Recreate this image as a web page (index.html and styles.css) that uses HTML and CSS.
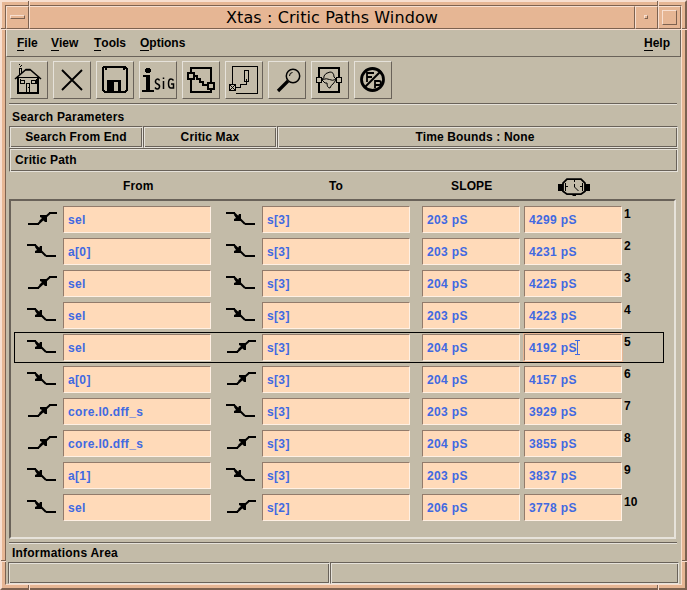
FILE: index.html
```html
<!DOCTYPE html>
<html lang="en">
<head>
<meta charset="utf-8">
<title>Xtas : Critic Paths Window</title>
<link rel="stylesheet" href="styles.css">
</head>
<body>
<svg class="defs" aria-hidden="true">
  <symbol id="rise" viewBox="0 0 30 14"><path d="M0 11h11v2H0zM21 0h8v2h-8z"/><path d="M10 12L22 1" fill="none" stroke="#000" stroke-width="2"/><path d="M12 3h7v7h-2l-2-2-3 2-1-1 3-3-2-1z"/></symbol>
  <symbol id="fall" viewBox="0 0 30 14"><path d="M0 0h9v2H0zM19 11h10v2H19z"/><path d="M8 1L19 12" fill="none" stroke="#000" stroke-width="2"/><path d="M13 2h2v7H8V7l2-1-2-3 1-1 3 2z"/></symbol>
</svg>
<div class="window">
  <i class="notch left top"></i><i class="notch right top"></i><i class="notch left bottom"></i><i class="notch right bottom"></i>
  <i class="tick left top"></i><i class="tick right top"></i><i class="tick left bottom"></i><i class="tick right bottom"></i>
  <div class="inner">
    <header class="titlebar">
      <span class="win-menu"><i></i></span>
      <h1><span>Xtas : Critic Paths Window</span></h1>
      <span class="win-min"><i></i></span>
      <span class="win-max"><i></i></span>
    </header>
    <nav class="menubar">
      <span class="m1"><u>F</u>ile</span><span class="m2"><u>V</u>iew</span><span class="m3"><u>T</u>ools</span><span class="m4"><u>O</u>ptions</span><span class="help"><u>H</u>elp</span>
    </nav>
    <div class="toolbar">
      <button><svg viewBox="0 0 36 36"><g fill="none" stroke="#000" shape-rendering="crispEdges"><path d="M8.500 13V6.500h2V12M6 30.500H28M5 15.500H29" /><path d="M7 16V30M27 16V30" stroke-width="2"/><path d="M6 31H28" stroke-width="2"/><path d="M9.500 18.500h4v3h-4zM20.500 18.500h4v3h-4zM15.500 22V30M18.500 22V30M15 21.500h4M17.500 25v1M9 17v5M25 17v5"/></g><path d="M4 17L15 7.500h4L30 17M14 8h6" fill="none" stroke="#000" stroke-width="1.600"/><path d="M9 4h1v1H9zM8 2h1v1H8zM10 3h1v1h-1z"/></svg></button>
      <button><svg viewBox="0 0 36 36"><path d="M8 8L28 28M28 8L8 28" fill="none" stroke="#000" stroke-width="1.900"/></svg></button>
      <button><svg viewBox="0 0 36 36" shape-rendering="crispEdges"><path fill="none" stroke="#000" stroke-width="2" d="M7 5h21l2 2v21l-2 2H8l-2-2V6z"/><path fill-rule="evenodd" d="M10 18h14v12H10zM17 20v9h4v-9zM8 6h2v2H8zM26 6h2v2h-2z"/></svg></button>
      <button><svg viewBox="0 0 36 36"><path shape-rendering="crispEdges" d="M6 6h4v1h1v3h-1v1H6v-1H5V7h1zM3 13h7v15h4v2H2v-2h4V15H3z"/><path fill="none" stroke="#000" stroke-width="1.500" d="M19.500 18.500q-.5-1.500-2-1.500t-2 2 2 3 2 3-2 2-2.500-1.500M23.500 19v8M23.500 15.500v1.500M33.500 18.500q-1-1.500-2.500-1.500-2.500 0-2.500 4.500T31 26h2.500v-4H31"/></svg></button>
      <button><svg viewBox="0 0 36 36" shape-rendering="crispEdges"><path fill="none" stroke="#000" stroke-width="2" d="M8 11V6h20v15M8 17v13h20v-3M5 11h6v6H5zM25 21h6v6h-6zM11 14h3v3h3v3h3v3h5"/></svg></button>
      <button><svg viewBox="0 0 36 36" shape-rendering="crispEdges"><path fill="none" stroke="#000" d="M6.500 22V4.500h25v27H10M3.500 22.500h6v6h-6zM4 23l5 5M9 23l-5 5M10 25.500h4v-3h6v-4M18.500 8.500h4v11h-4zM20.500 17v5"/></svg></button>
      <button><svg viewBox="0 0 36 36"><circle cx="24" cy="14" r="6.700" fill="none" stroke="#000" stroke-width="1.500"/><path d="M20.500 14q0-3.500 3-3.500" fill="none" stroke="#000"/><path d="M19 19L9 29" stroke="#000" stroke-width="3.200"/></svg></button>
      <button><svg viewBox="0 0 36 36"><path shape-rendering="crispEdges" fill="none" stroke="#000" stroke-width="2" d="M7 15V6h20v9M7 21v9h20v-9"/><path shape-rendering="crispEdges" fill="none" stroke="#000" stroke-width="1.200" d="M4.500 15.500h5v5h-5zM24.500 15.500h5v5h-5z"/><path fill="none" stroke="#000" d="M10 17.500q5-1.500 7.500 0t6.500 0M10 17q3-1 2-3 1-3 6-4 4 0 4 5l2 2M10 18l3 3h2q0 5 3 5 1-3 3-4l3-4"/></svg></button>
      <button><svg viewBox="0 0 36 36"><circle cx="17.500" cy="17.500" r="11" fill="none" stroke="#000" stroke-width="2.800"/><path d="M9.500 25.500L26 9" stroke="#000" stroke-width="2"/><path d="M12 20v-9h7M12 15h5M20 26v-7h4q2 0 2 2t-2 2h-4" fill="none" stroke="#000" stroke-width="1.800"/></svg></button>
    </div>
    <hr class="rule">
    <div class="label search-label">Search Parameters</div>
    <div class="params"><div class="groove">Search From End</div><div class="groove">Critic Max</div><div class="groove">Time Bounds : None</div></div>
    <div class="groove path-title">Critic Path</div>
    <div class="heads"><span class="h-from">From</span><span class="h-to">To</span><span class="h-slope">SLOPE</span>
      <svg class="watch" viewBox="0 0 32 18"><path d="M0 6h5v7H0zM27 6h5v7h-5zM14.500 16h3.500v2h-3.500z"/><path d="M9 1.200h14l4 4v8l-4 3H9l-4-3v-8z" fill="none" stroke="#000" stroke-width="1.800"/><path d="M7.500 5v8M24.500 5v8M16.500 2v2M16.500 6v3l4 4M8 8.500h2M22 8.500h2" fill="none" stroke="#000"/></svg>
    </div>
    <main class="list">
      <div class="row"><svg class="up"><use href="#rise"/></svg><b>sel</b><svg><use href="#fall"/></svg><b>s[3]</b><b>203 pS</b><b>4299 pS</b><em>1</em></div>
      <div class="row"><svg><use href="#fall"/></svg><b>a[0]</b><svg><use href="#fall"/></svg><b>s[3]</b><b>203 pS</b><b>4231 pS</b><em>2</em></div>
      <div class="row"><svg class="up"><use href="#rise"/></svg><b>sel</b><svg><use href="#fall"/></svg><b>s[3]</b><b>204 pS</b><b>4225 pS</b><em>3</em></div>
      <div class="row"><svg><use href="#fall"/></svg><b>sel</b><svg><use href="#fall"/></svg><b>s[3]</b><b>203 pS</b><b>4223 pS</b><em>4</em></div>
      <div class="row selected"><svg><use href="#fall"/></svg><b>sel</b><svg class="up"><use href="#rise"/></svg><b>s[3]</b><b>204 pS</b><b class="focus">4192 pS<svg class="caret" viewBox="0 0 5 15" shape-rendering="crispEdges"><path d="M0 .5h5M2.500 0v15M0 14.500h5" fill="none" stroke="#4169e1"/></svg></b><em>5</em></div>
      <div class="row"><svg><use href="#fall"/></svg><b>a[0]</b><svg class="up"><use href="#rise"/></svg><b>s[3]</b><b>204 pS</b><b>4157 pS</b><em>6</em></div>
      <div class="row"><svg class="up"><use href="#rise"/></svg><b>core.l0.dff_s</b><svg><use href="#fall"/></svg><b>s[3]</b><b>203 pS</b><b>3929 pS</b><em>7</em></div>
      <div class="row"><svg class="up"><use href="#rise"/></svg><b>core.l0.dff_s</b><svg class="up"><use href="#rise"/></svg><b>s[3]</b><b>204 pS</b><b>3855 pS</b><em>8</em></div>
      <div class="row"><svg><use href="#fall"/></svg><b>a[1]</b><svg><use href="#fall"/></svg><b>s[3]</b><b>203 pS</b><b>3837 pS</b><em>9</em></div>
      <div class="row"><svg><use href="#fall"/></svg><b>sel</b><svg class="up"><use href="#rise"/></svg><b>s[2]</b><b>206 pS</b><b>3778 pS</b><em>10</em></div>
    </main>
    <hr class="rule">
    <div class="label info-label">Informations Area</div>
    <div class="status"><div class="groove"></div><div class="groove"></div></div>
  </div>
</div>
</body>
</html>
```
FILE: styles.css
```css
:root {
  --bg: #c3bba8;
  --tan: #e6b694;
  --tan-dark: #7d6250;
  --tan-light: #f8dfd0;
  --dark: #696259;
  --light: #e6e2da;
}
* { box-sizing: border-box; }
html, body { margin: 0; height: 590px; overflow: hidden; }
body { font: bold 12px/14px "Liberation Sans", Arial, sans-serif; letter-spacing: .15px; color: #000; }
svg { display: block; flex: none; }
.defs { position: absolute; width: 0; height: 0; }
.window {
  position: relative; width: 687px; height: 590px; background: var(--tan);
  border: 2px solid; border-color: var(--tan-light) var(--tan-dark) var(--tan-dark) var(--tan-light);
  padding: 3px;
}
.inner {
  width: 677px; height: 580px; background: var(--bg);
  border: 1px solid; border-color: var(--tan-dark) var(--tan-light) var(--tan-light) var(--tan-dark);
  display: flex; flex-direction: column;
}
.notch, .tick { position: absolute; }
.notch { width: 5px; height: 2px; background: linear-gradient(var(--tan-dark) 50%, var(--tan-light) 50%); }
.notch.left { left: -1px; }
.notch.right { right: -2px; }
.notch.top { top: 26px; }
.notch.bottom { top: 558px; }
.tick { width: 2px; height: 5px; background: linear-gradient(90deg, var(--tan-dark) 50%, var(--tan-light) 50%); }
.tick.left { left: 26px; }
.tick.right { left: 655px; }
.tick.top { top: -1px; }
.tick.bottom { bottom: -2px; }

.titlebar { display: flex; height: 24px; flex: none; background: var(--tan); }
.titlebar > * { border: 1px solid; border-color: var(--tan-light) var(--tan-dark) var(--tan-dark) var(--tan-light); box-shadow: 0 1px var(--tan-light); height: 23px; }
.titlebar i { display: block; border: 1px solid; border-color: var(--tan-light) var(--tan-dark) var(--tan-dark) var(--tan-light); }
.win-menu { width: 23px; padding: 8px 0 0 3px; }
.win-menu i { width: 15px; height: 4px; }
.titlebar h1 { flex: 1; margin: 0; font: 16px/22px "DejaVu Sans", sans-serif; text-align: center; letter-spacing: .1px; }
.win-min { width: 23px; padding: 8px 0 0 8px; }
.win-min i { width: 4px; height: 4px; }
.win-max { width: 23px; padding: 3px 0 0 3px; }
.win-max i { width: 15px; height: 15px; }

.menubar { display: flex; flex: none; height: 27px; padding: 6px 0 0 10px; border: 1px solid; border-color: transparent var(--dark) var(--dark) var(--light); border-top: 0; letter-spacing: 0; }
.menubar u { text-decoration: none; display: inline-block; height: 15px; border-bottom: 1px solid #000; }
.m1 { width: 34px; } .m2 { width: 43px; } .m3 { width: 46px; }
.help { margin-left: auto; margin-right: 10px; }

.toolbar { display: flex; flex: none; gap: 5px; padding: 4px 0 4px 4px; }
.toolbar button { width: 38px; height: 38px; padding: 0; background: none; border: 1px solid; border-color: var(--light) var(--dark) var(--dark) var(--light); }
.toolbar svg { width: 36px; height: 36px; }
.rule { flex: none; width: 668px; height: 2px; margin: 0 0 0 3px; border: 0; background: linear-gradient(var(--dark) 50%, var(--light) 50%); }
.label { flex: none; padding-left: 6px; letter-spacing: .22px; }
.search-label { height: 21px; padding-top: 5px; }
.groove {
  border: 1px solid; border-color: var(--dark) var(--light) var(--light) var(--dark);
  box-shadow: inset 1px 1px var(--light), inset -1px -1px var(--dark);
}
.params { display: flex; flex: none; width: 669px; height: 22px; margin-left: 3px; text-align: center; line-height: 20px; }
.params .groove { width: 134px; }
.params .groove:last-child { width: 401px; padding-right: 5px; }
.path-title { flex: none; width: 669px; height: 24px; margin-left: 3px; padding-left: 5px; line-height: 22px; }
.heads { display: flex; flex: none; height: 27px; padding: 7px 0 0 117px; }
.h-from { width: 206px; } .h-to { width: 122px; } .h-slope { width: 107px; }
.watch { width: 32px; height: 18px; margin-top: -1px; }
.list { flex: none; width: 667px; height: 340px; margin: 0 0 3px 3px; padding: 3px 0 0 3px; border: 2px solid; border-color: var(--dark) var(--light) var(--light) var(--dark); }
.row { display: grid; grid-template-columns: 36px 148px 15px 36px 148px 12px 98px 4px 98px 2px 1fr; width: 650px; height: 31px; margin-bottom: 1px; padding-left: 12px; border: 1px solid transparent; }
.row.selected { border-color: #000; }
.row > :nth-child(3) { grid-column: 4; }
.row > :nth-child(4) { grid-column: 5; }
.row > :nth-child(5) { grid-column: 7; }
.row > :nth-child(6) { grid-column: 9; }
.row > :nth-child(7) { grid-column: 11; }
.row > svg { width: 30px; height: 14px; margin-top: 7px; }
.row > svg.up { margin-left: 1px; }
.row > b { position: relative; height: 27px; margin-top: 1px; padding-left: 4px; line-height: 26px; letter-spacing: .35px; background: #ffdab9; color: #4169e1; border: 1px solid; border-color: #927b6b #fff0e3 #fff0e3 #927b6b; }
.row > b.focus { outline: 1px solid var(--tan); }
.row em { font-style: normal; margin-top: 2px; }
.caret { position: absolute; left: 50px; top: 5px; width: 5px; height: 15px; }
.info-label { height: 18px; padding-top: 2px; }
.status { display: flex; flex: none; width: 671px; height: 22px; margin-left: 2px; }
.status .groove { width: 322px; }
.status .groove:last-child { width: 349px; }
```
